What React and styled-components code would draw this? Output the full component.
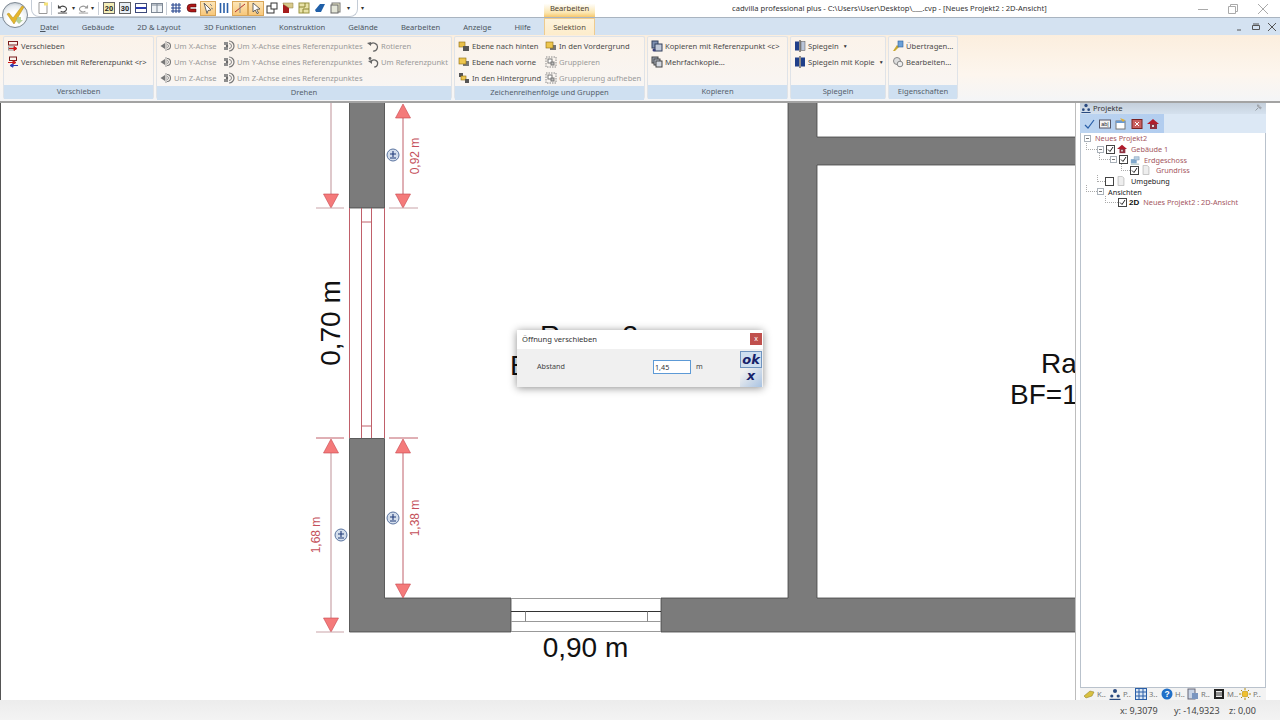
import React from 'react';
import styled, {createGlobalStyle} from 'styled-components';

const Global = createGlobalStyle`
  html, body {
    margin: 0;
    padding: 0;
    overflow: hidden;
    background: #fff;
    font-family: "Noto Sans", "Open Sans", sans-serif;
    font-size: 7.6px;
    color: #444;
  }
`;

const Page = styled.div`
  position: relative;
  width: 1280px;
  height: 720px;
  display: flex;
  flex-direction: column;
  overflow: hidden;
`;

/* title bar */
const TitleBar = styled.div`
  height: 18px;
  flex: none;
  display: flex;
  align-items: flex-start;
  background: #fff;
  border-bottom: 1px solid #a9b4c0;
  box-sizing: border-box;
`;

const Logo = styled.div`
  position: absolute;
  z-index: 2;
  left: 2px;
  top: 2px;
  width: 26px;
  height: 26px;
  border-radius: 50%;
  background: radial-gradient(circle at 50% 65%, #fff 35%, #e6ebef 65%, #97a2ad 100%);
  border: 1px solid #7d8893;
  box-sizing: border-box;
  display: flex;
  align-items: center;
  justify-content: center;
`;

const Quick = styled.div`
  margin-left: 31px;
  height: 17px;
  width: 327px;
  display: flex;
  align-items: center;
  padding-left: 5px;
  border: 1px solid #c4ccd6;
  border-top: none;
  border-radius: 0 0 8px 8px;
  box-sizing: border-box;
`;

const QuickSlot = styled.div`
  width: ${p => p.$w || 16}px;
  height: 15px;
  flex: none;
  display: flex;
  align-items: center;
  justify-content: center;
  box-sizing: border-box;
  font-size: 6px;
  color: #333;
  ${p => p.$on && 'background: linear-gradient(#fde6b8, #f8c77a); border: 1px solid #d9a659;'}
`;

const QuickSep = styled.div`
  width: 1px;
  height: 13px;
  background: #c8ced6;
  flex: none;
  margin: 0 ${p => p.$m || 2}px;
`;

const QuickMore = styled.div`
  margin-left: 3px;
  font-size: 6px;
  line-height: 16px;
  color: #333;
  width: 183px;
`;

const ContextTab = styled.div`
  width: 51px;
  height: 17px;
  line-height: 16px;
  text-align: center;
  color: #4a4030;
  background: linear-gradient(#fff 20%, #fbe6b0 75%, #f7c86e);
`;

const WindowTitle = styled.div`
  margin-left: 137px;
  line-height: 17px;
  color: #333;
  white-space: nowrap;
`;

const WinButtons = styled.div`
  margin-left: auto;
  display: flex;
  padding-right: 2px;
`;

const WinButton = styled.div`
  width: 30px;
  height: 17px;
  display: flex;
  align-items: center;
  justify-content: center;
`;

/* tabs */
const TabRow = styled.div`
  height: 17px;
  flex: none;
  display: flex;
  align-items: stretch;
  gap: 23px;
  padding-left: 40px;
  background: #d4e2f1;
  box-sizing: border-box;
  position: relative;
`;

const Tab = styled.div`
  line-height: 18px;
  color: #4b5560;
  white-space: nowrap;
  ${p => p.$active && `
    position: absolute;
    left: 544px;
    top: 0;
    height: 17px;
    width: 51px;
    text-align: center;
    color: #55503f;
    background: linear-gradient(#fdf3dc, #fdeccb);
    border: 1px solid #eecb8f;
    border-bottom: none;
    box-sizing: border-box;
    line-height: 16px;
  `}
`;

const MdiButtons = styled.div`
  position: absolute;
  right: 0;
  top: 4px;
  display: flex;
  gap: 6px;
  padding-right: 3px;
`;

/* ribbon */
const Ribbon = styled.div`
  height: 68px;
  flex: none;
  display: flex;
  gap: 2px;
  padding: 1px 2px 2px 3px;
  box-sizing: border-box;
  background: linear-gradient(#fbeede 0, #fdf6ee 60%, #f4f5f7);
  border-bottom: 2px solid #a3a3a3;
`;

const Group = styled.div`
  width: ${p => p.$w}px;
  flex: none;
  display: flex;
  flex-direction: column;
  background: linear-gradient(#fbf3ea, #f8f6f5);
  border: 1px solid #dfe3e8;
  border-bottom: none;
  border-radius: 2px;
  box-sizing: border-box;
`;

const GroupBody = styled.div`
  flex: 1;
  display: flex;
  padding: 1px 0 0 3px;
`;

const GroupFooter = styled.div`
  height: 14px;
  flex: none;
  line-height: 12px;
  text-align: center;
  color: #55606c;
  background: #cfe0f1;
`;

const Column = styled.div`
  width: ${p => (p.$w ? `${p.$w}px` : 'auto')};
  flex: none;
  display: flex;
  flex-direction: column;
`;

const Item = styled.div`
  height: 16px;
  display: flex;
  align-items: center;
  gap: 2px;
  white-space: nowrap;
  color: ${p => (p.$off ? '#9a9a9a' : '#4a4a4a')};
`;

const Caret = styled.span`
  font-size: 5px;
  margin-left: 2px;
  color: #333;
`;

/* main area */
const Main = styled.div`
  flex: 1;
  display: flex;
  min-height: 0;
`;

const Canvas = styled.div`
  position: relative;
  width: 1075px;
  flex: none;
  overflow: hidden;
  background: #fff;
  border-right: 1px solid #bdbdbd;
`;

const Drawing = styled.svg`
  display: block;
  width: 1075px;
  height: 597px;
`;

const Dialog = styled.div`
  position: absolute;
  left: 517px;
  top: 227px;
  width: 246px;
  height: 57px;
  display: flex;
  flex-direction: column;
  background: #f0f0f0;
  box-shadow: 0 1px 8px rgba(0, 0, 0, .45);
`;

const DialogHead = styled.div`
  height: 19px;
  flex: none;
  display: flex;
  align-items: center;
  justify-content: space-between;
  padding: 0 1px 1px 5px;
  box-sizing: border-box;
  background: #fff;
  color: #333;
`;

const CloseBox = styled.div`
  width: 12px;
  height: 12px;
  background: #c0504d;
  color: #fff;
  font-size: 7px;
  line-height: 11px;
  text-align: center;
`;

const DialogBody = styled.div`
  flex: 1;
  display: flex;
  align-items: flex-start;
  font-size: 7.2px;
`;

const FieldLabel = styled.div`
  width: 116px;
  margin-left: 20px;
  margin-top: 12px;
  color: #444;
`;

const FieldInput = styled.div`
  width: 35px;
  height: 12px;
  margin-top: 11px;
  padding-left: 1px;
  line-height: 12px;
  background: #fff;
  border: 1px solid #5d9ad6;
  color: #333;
`;

const FieldUnit = styled.div`
  margin-left: 5px;
  margin-top: 12px;
  width: 44px;
`;

const DialogActions = styled.div`
  width: 22px;
  height: 36px;
  margin-left: auto;
  margin-top: 2px;
  margin-right: 1px;
  display: flex;
  flex-direction: column;
  background: linear-gradient(135deg, #f0f0f0 40%, #a9c3e2);
`;

const ActionBtn = styled.div`
  height: 17px;
  font-family: "DejaVu Sans", sans-serif;
  font-weight: bold;
  font-style: italic;
  font-size: 13px;
  line-height: 16px;
  text-align: center;
  color: #16226a;
  box-sizing: border-box;
  ${p => p.$primary && 'background: #cfdff0; border: 1px solid #6f93bf;'}
`;

/* project panel */
const Side = styled.div`
  width: 186px;
  flex: none;
  margin-left: 4px;
  display: flex;
  flex-direction: column;
  background: #f3f3f3;
`;

const SideHead = styled.div`
  height: 11px;
  flex: none;
  display: flex;
  align-items: center;
  gap: 2px;
  padding: 0 3px 2px 1px;
  box-sizing: border-box;
  background: linear-gradient(#c4cfdb, #d5e1ee);
  color: #333;
`;

const PinSlot = styled.span`
  margin-left: auto;
  display: flex;
`;

const SideTools = styled.div`
  height: 19px;
  flex: none;
  display: flex;
  align-items: center;
  gap: 4px;
  padding-left: 3px;
  background: linear-gradient(90deg, #bcd4f0, #b2cdef 45%, #dce8f5 45.1%, #dce8f5);
`;

const ToolSlot = styled.div`
  width: 12px;
  height: 12px;
  display: flex;
  align-items: center;
  justify-content: center;
`;

const Tree = styled.div`
  flex: 1;
  background: #fff;
  border: 1px solid #b9c2cc;
  border-top: none;
  box-sizing: border-box;
  font-size: 7.3px;
`;

const Row = styled.div`
  position: relative;
  height: 10.7px;
  display: flex;
  align-items: center;
  gap: 2px;
  padding-left: ${p => p.$indent}px;
  white-space: nowrap;
  color: ${p => (p.$dark ? '#222' : '#a4565e')};
  ${p => p.$stub && `
    &::before {
      content: '';
      position: absolute;
      left: ${p.$indent - p.$stub}px;
      width: ${p.$stub - 1}px;
      top: -1px;
      height: 6px;
      border-left: 1px dotted #aaa;
      border-bottom: 1px dotted #aaa;
    }
  `}
`;

const Expander = styled.span`
  width: 7px;
  height: 7px;
  flex: none;
  border: 1px solid #aab2ba;
  box-sizing: border-box;
  position: relative;
  background: #fff;
  &::after {
    content: '';
    position: absolute;
    left: 1px;
    right: 1px;
    top: 2px;
    height: 1px;
    background: #777;
  }
`;

const Check = styled.span`
  width: 9px;
  height: 9px;
  flex: none;
  border: 1px solid #444;
  box-sizing: border-box;
  background: #fff;
  display: flex;
  align-items: center;
  justify-content: center;
`;

const RowLabel = styled.span`
  margin-left: ${p => p.$gap || 2}px;
`;

const BoldTag = styled.span`
  font-weight: bold;
  font-size: 8px;
  color: #111;
  font-family: "Liberation Sans", sans-serif;
`;

const SideTabs = styled.div`
  height: 12px;
  flex: none;
  display: flex;
  align-items: center;
  padding-left: 3px;
  background: #f3f3f3;
`;

const SideTab = styled.div`
  width: 26px;
  flex: none;
  display: flex;
  align-items: center;
  gap: 2px;
  color: #777;
`;

/* status bar */
const Status = styled.div`
  height: 20px;
  flex: none;
  display: flex;
  align-items: center;
  justify-content: flex-end;
  background: linear-gradient(#ececec, #f3f3f3);
  font-size: 9px;
  color: #444;
`;

const StatusCell = styled.div`
  width: ${p => p.$w}px;
  white-space: nowrap;
`;

/* icons */
const Svg = ({size = 12, children}) => (
  <svg width={size} height={size} viewBox="0 0 12 12" style={{flex: 'none'}}>{children}</svg>
);

const shapes = {
  move: <>
    <rect x="1.5" y="1.5" width="9" height="3.5" fill="none" stroke="#7a1c1c" />
    <rect x="1.5" y="7" width="6" height="3" fill="none" stroke="#999" />
    <path d="M2 8.5h7M7 6.5l3 2-3 2z" stroke="#d01818" fill="#d01818" />
  </>,
  moveRef: <>
    <rect x="2.5" y="1" width="7" height="3.5" fill="none" stroke="#7a1c1c" />
    <path d="M1 6.5h7M6 4.8l3 1.7-3 1.7z" stroke="#d01818" fill="#d01818" />
    <path d="M11 9.5H4M6 7.8L3 9.5l3 1.7z" stroke="#2a3bb0" fill="#2a3bb0" />
  </>,
  rot: <>
    <path d="M.5 6L5 3v6z" fill="#777" />
    <path d="M6 1v10" stroke="#999" />
    <path d="M7 2.5a3.5 3.5 0 0 1 0 7" fill="none" stroke="#777" strokeWidth="1.1" />
    <path d="M7 4.5a1.5 1.5 0 0 1 0 3" fill="none" stroke="#999" />
  </>,
  rotRef: <>
    <path d="M1 2h4v3H1zM1 7h4v3H1z" fill="#8d8d8d" />
    <path d="M6 1a5 5 0 0 1 0 10" fill="none" stroke="#777" strokeWidth="1.2" />
    <path d="M6 3.5a2.5 2.5 0 0 1 0 5" fill="none" stroke="#888" />
    <circle cx="4" cy="6" r="1.2" fill="#666" />
  </>,
  rotate: <>
    <path d="M3 5a4 4 0 1 1 3 6" fill="none" stroke="#666" strokeWidth="1.2" />
    <path d="M0 3l4-1v4z" fill="#666" />
  </>,
  rotate2: <>
    <circle cx="3" cy="2.5" r="1.4" fill="#666" />
    <path d="M4 6a3.5 3.5 0 1 1 3 5" fill="none" stroke="#666" strokeWidth="1.2" />
    <path d="M1 5l4-1v4z" fill="#666" />
  </>,
  back: <>
    <rect x="1" y="2" width="6" height="5" fill="#e8c04a" stroke="#8a6a10" strokeWidth=".6" />
    <rect x="5" y="6" width="6" height="5" fill="#555" />
  </>,
  front: <>
    <rect x="5" y="5" width="6" height="5" fill="#777" />
    <rect x="1" y="2" width="7" height="6" fill="#eec64e" stroke="#8a6a10" strokeWidth=".6" />
  </>,
  bottom: <>
    <rect x="1" y="1" width="4" height="4" fill="#555" />
    <rect x="3" y="4" width="5" height="4" fill="#eec64e" stroke="#8a6a10" strokeWidth=".6" />
    <rect x="7" y="7" width="4" height="4" fill="#555" />
  </>,
  group: <>
    <rect x="1" y="1" width="10" height="10" fill="none" stroke="#888" strokeDasharray="1.5 1" />
    <rect x="3" y="3" width="4" height="4" fill="#fff" stroke="#777" />
    <rect x="6" y="6" width="3" height="3" fill="#bbb" stroke="#777" />
  </>,
  copyRef: <>
    <rect x="1" y="1" width="6" height="7" fill="#7d8fb0" stroke="#33415e" />
    <rect x="4" y="4" width="7" height="7" fill="#c0c8d8" stroke="#33415e" />
    <circle cx="3" cy="10" r="1.5" fill="#3a3f7a" />
  </>,
  copyMany: <>
    <rect x="1" y="1" width="6" height="6" fill="#9aa4b4" stroke="#444" />
    <rect x="3" y="3" width="6" height="6" fill="#b5bdca" stroke="#444" />
    <rect x="5" y="5" width="6" height="6" fill="#d3d8e0" stroke="#444" />
  </>,
  mirror: <>
    <rect x="1" y="1.5" width="4" height="9" fill="#1f3f8a" />
    <rect x="7" y="1.5" width="4" height="9" fill="#b9c4d8" stroke="#555" strokeWidth=".5" />
    <path d="M6 0v12" stroke="#222" />
  </>,
  mirrorCopy: <>
    <rect x="1" y="1.5" width="4" height="9" fill="#1f3f8a" />
    <rect x="7" y="1.5" width="4" height="9" fill="#1f3f8a" />
    <path d="M6 0v12" stroke="#222" />
  </>,
  transfer: <>
    <path d="M1 11l4-6 2 2-4 4z" fill="#c9a830" />
    <rect x="6" y="1" width="5" height="6" fill="#6aa0d8" stroke="#2d5f9a" strokeWidth=".6" />
  </>,
  edit: <>
    <circle cx="5" cy="5" r="3.5" fill="#ddd" stroke="#888" />
    <circle cx="8" cy="8" r="2.8" fill="#eee" stroke="#888" />
  </>,
  doc: <>
    <path d="M2 .5h6l2 2v9H2z" fill="#fff" stroke="#999" />
    <path d="M7 .5h4v3H7z" fill="#f5e27a" />
  </>,
  undo: <>
    <path d="M3 5a4 3 0 1 1 1 4" fill="none" stroke="#444" strokeWidth="1.2" />
    <path d="M1 2v4h4z" fill="#444" />
    <path d="M1 11h10" stroke="#444" />
  </>,
  redo: <>
    <path d="M9 5a4 3 0 1 0-1 4" fill="none" stroke="#999" strokeWidth="1.2" />
    <path d="M11 2v4H7z" fill="#999" />
    <path d="M1 11h10" stroke="#999" />
  </>,
  d2: <>
    <rect x=".5" y=".5" width="11" height="11" fill="#f4eeb8" stroke="#666" />
    <text x="6" y="9" fontSize="7.5" fontWeight="bold" textAnchor="middle" fill="#222" fontFamily="Liberation Sans">20</text>
  </>,
  d3: <>
    <rect x=".5" y=".5" width="11" height="11" fill="#e8eef4" stroke="#666" />
    <text x="6" y="9" fontSize="7.5" fontWeight="bold" textAnchor="middle" fill="#222" fontFamily="Liberation Sans">30</text>
  </>,
  rows: <>
    <rect x=".5" y="1.5" width="11" height="9" fill="#fff" stroke="#3d4a7a" />
    <path d="M1 6h10" stroke="#2a3bb0" strokeWidth="2" />
  </>,
  cols: <>
    <rect x=".5" y="1.5" width="11" height="9" fill="#eef2f6" stroke="#7d8794" />
    <path d="M6 2v8M1 3h10" stroke="#7d8794" />
  </>,
  grid: <path d="M3 1v10M6 1v10M9 1v10M1 3h10M1 6h10M1 9h10" stroke="#1f3f8a" />,
  magnet: <path d="M10 2H5a4 4 0 0 0 0 8h5V7H5a1 1 0 0 1 0-2h5z" fill="#b01818" stroke="#300" strokeWidth=".5" />,
  snap: <>
    <path d="M2 1l7 7-3 .5-1 3z" fill="#fff" stroke="#666" />
    <path d="M8 2l2 2M9 6l2 1" stroke="#888" />
  </>,
  bars: <path d="M2.5 1v10M6 1v10M9.5 1v10" stroke="#2a5fa8" strokeWidth="1.6" />,
  line: <>
    <path d="M1 10L11 2" stroke="#b03030" />
    <path d="M6 1v10" stroke="#888" />
  </>,
  cursor: <path d="M3 1l7 6-3.4.4L8.5 11l-1.5.6-1.8-3.6L3 10z" fill="#fff" stroke="#444" strokeWidth=".8" />,
  frames: <>
    <rect x="1" y="4" width="7" height="7" fill="#fff" stroke="#333" />
    <rect x="5" y="1" width="6" height="6" fill="#fff" stroke="#333" />
  </>,
  roof: <>
    <path d="M1 11V2l6 3v6z" fill="#a51c1c" />
    <path d="M1 1h10v5H7L1 2z" fill="#d8c98a" stroke="#8a7a40" strokeWidth=".5" />
  </>,
  stairs: <>
    <rect x="1" y="1" width="10" height="10" fill="#e9e3a8" stroke="#9a9440" />
    <path d="M1 5h6V1M5 11V7h6" stroke="#8a8430" fill="none" />
  </>,
  diamond: <path d="M1 8l5-6h5L7 10H2z" fill="#1f5fa8" />,
  box: <>
    <rect x="2" y="1" width="8" height="9" fill="#f0eecd" stroke="#777" />
    <rect x="1" y="3" width="7" height="8" fill="#e4e6d8" stroke="#666" />
  </>,
  tick: <path d="M2 7l3 3 6-8" fill="none" stroke="#2a5fa8" strokeWidth="1.2" />,
  abl: <>
    <rect x=".5" y="2" width="11" height="8" fill="#f4f4f4" stroke="#556" />
    <text x="6" y="8" fontSize="5.5" textAnchor="middle" fill="#223" fontFamily="Liberation Sans">ab|</text>
  </>,
  props: <>
    <rect x="1" y="3" width="9" height="8" fill="#fff" stroke="#777" />
    <path d="M1 3h9v2H1z" fill="#6a9ad0" />
    <path d="M5 0l5 2-2 2z" fill="#e2b030" />
  </>,
  redX: <>
    <rect x="1" y="1.5" width="10" height="9" fill="#c86060" stroke="#7a2020" />
    <path d="M4 4l4 4M8 4L4 8" stroke="#fff" />
  </>,
  house: <>
    <path d="M0 6l6-5 6 5z" fill="#b01c2c" />
    <rect x="3" y="6" width="7" height="5" fill="#8f3040" />
    <rect x="5" y="7" width="2" height="2" fill="#ddd" />
  </>,
  floors: <>
    <rect x="1" y="5" width="7" height="5" fill="#7fa8cc" />
    <path d="M5 2h6v4H5z" fill="#b8cfe4" stroke="#6a8aa8" strokeWidth=".5" />
    <path d="M1 11h10" stroke="#8aa" />
  </>,
  sheet: <path d="M2.5 .5h5l2 2v9h-7z" fill="#eeeeee" stroke="#bbb" />,
  people: <>
    <circle cx="6" cy="3" r="2" fill="#2a4a80" />
    <circle cx="2.8" cy="8" r="1.6" fill="#2a4a80" />
    <circle cx="9.2" cy="8" r="1.6" fill="#2a4a80" />
    <path d="M.5 11.5h11" stroke="#2a4a80" strokeWidth="1.4" />
  </>,
  pin: <path d="M1 8l6-5 4 1-2 4-6 2z" fill="#d8c040" stroke="#8a7a20" strokeWidth=".5" />,
  table: <>
    <rect x=".5" y=".5" width="11" height="11" fill="#dce8f5" stroke="#2a5fa8" />
    <path d="M4 1v10M8 1v10M1 4h10M1 8h10" stroke="#2a5fa8" />
  </>,
  help: <>
    <circle cx="6" cy="6" r="5.5" fill="#1f6fc8" />
    <text x="6" y="9" fontSize="8.5" fontWeight="bold" textAnchor="middle" fill="#fff" fontFamily="Liberation Sans">?</text>
  </>,
  report: <>
    <rect x="1" y="1" width="7" height="10" fill="#c8d4e6" stroke="#667" />
    <path d="M5 5h6v6H5z" fill="#7a96c0" />
  </>,
  memo: <>
    <rect x="1" y="1" width="10" height="10" fill="#222" />
    <rect x="3" y="3" width="6" height="6" fill="#eee" />
    <path d="M3 5h6M3 7h6" stroke="#333" />
  </>,
  sun: <>
    <circle cx="6" cy="6" r="3" fill="#f0c030" stroke="#b08a10" strokeWidth=".5" />
    <path d="M6 0v2M6 10v2M0 6h2M10 6h2M2 2l1.4 1.4M8.6 8.6L10 10M2 10l1.4-1.4M8.6 3.4L10 2" stroke="#b08a10" />
  </>,
  pinTack: <path d="M3 9l3-3M5 3l4 4M6 2l4 4-2 0-2-2z" stroke="#8a8f96" fill="#fff" />,
};

const Icon = ({name, size}) => <Svg size={size}>{shapes[name]}</Svg>;

const Tick = () => (
  <svg width="7" height="7" viewBox="0 0 7 7"><path d="M1 3.5l2 2 3-4.5" fill="none" stroke="#222" strokeWidth="1" /></svg>
);

/* ribbon data */
const groups = [
  {title: 'Verschieben', w: 151, cols: [
    {items: [['move', 'Verschieben'], ['moveRef', 'Verschieben mit Referenzpunkt <r>']]},
  ]},
  {title: 'Drehen', w: 296, cols: [
    {w: 63, items: [['rot', 'Um X-Achse', 1], ['rot', 'Um Y-Achse', 1], ['rot', 'Um Z-Achse', 1]]},
    {w: 144, items: [
      ['rotRef', 'Um X-Achse eines Referenzpunktes', 1],
      ['rotRef', 'Um Y-Achse eines Referenzpunktes', 1],
      ['rotRef', 'Um Z-Achse eines Referenzpunktes', 1],
    ]},
    {items: [['rotate', 'Rotieren', 1], ['rotate2', 'Um Referenzpunkt', 1]]},
  ]},
  {title: 'Zeichenreihenfolge und Gruppen', w: 191, cols: [
    {w: 87, items: [['back', 'Ebene nach hinten'], ['front', 'Ebene nach vorne'], ['bottom', 'In den Hintergrund']]},
    {items: [['front', 'In den Vordergrund'], ['group', 'Gruppieren', 1], ['group', 'Gruppierung aufheben', 1]]},
  ]},
  {title: 'Kopieren', w: 141, cols: [
    {items: [['copyRef', 'Kopieren mit Referenzpunkt <c>'], ['copyMany', 'Mehrfachkopie...']]},
  ]},
  {title: 'Spiegeln', w: 96, cols: [
    {items: [['mirror', 'Spiegeln', 0, 1], ['mirrorCopy', 'Spiegeln mit Kopie', 0, 1]]},
  ]},
  {title: 'Eigenschaften', w: 70, cols: [
    {items: [['transfer', 'Übertragen...'], ['edit', 'Bearbeiten...']]},
  ]},
];

const tabs = ['Gebäude', '2D & Layout', '3D Funktionen', 'Konstruktion', 'Gelände', 'Bearbeiten', 'Anzeige', 'Hilfe'];

const Arrow = ({x, y, up, color = '#f47a7a'}) => (
  <path
    d={up ? `M${x} ${y}l-7.5 14h15z` : `M${x} ${y}l-7.5 -14h15z`}
    fill={color}
    stroke="#c8474f"
    strokeWidth=".6"
  />
);

const PlusMark = ({x, y}) => (
  <g>
    <circle cx={x} cy={y} r="6" fill="#d4deec" stroke="#5a74a0" />
    <path d={`M${x - 3} ${y - 1}h6M${x} ${y - 4}v6M${x - 3} ${y + 3}h6`} stroke="#1f3a78" strokeWidth="1.1" fill="none" />
  </g>
);

const DimText = ({x, y, children}) => (
  <text
    x={x}
    y={y}
    transform={`rotate(-90 ${x} ${y})`}
    textAnchor="middle"
    fontSize="12"
    fontFamily="Liberation Sans"
    fill="#c4505a"
  >{children}</text>
);

const WALL = '#7b7b7b';
const RED = '#c0606a';

const Plan = () => (
  <Drawing viewBox="0 103 1075 597">
    <g fill={WALL} stroke="#444" strokeWidth=".8">
      <rect x="349.5" y="100" width="35" height="108" />
      <path d="M349.5 438.5h35v159.5h126.5v34H349.5z" />
      <path d="M661 598h127V100h29v37h262v28H817v433h262v34H661z" />
    </g>
    <path d="M.5 103v597" stroke="#555" />

    {/* window left */}
    <g stroke={RED} strokeWidth="1" fill="none">
      <path d="M349.5 208v230M384.5 208v230M361.5 208v230M371.5 208v230M361.5 222h10M361.5 426h10" />
    </g>
    {/* window bottom */}
    <path d="M511 598.5h150M511 621.5h150M511 631.5h150" stroke="#999" fill="none" />
    <path d="M511 611.5h150" stroke="#333" fill="none" />
    <path d="M525.5 611.5v10M647.5 611.5v10" stroke="#888" fill="none" />

    {/* upper dims */}
    <path d="M331 103v92" stroke="#c9a3a8" strokeWidth="1.2" />
    <Arrow x={331} y={208} />
    <path d="M316 208h28" stroke="#c9a3a8" />
    <path d="M403 115v80" stroke={RED} />
    <Arrow x={403} y={104} up />
    <Arrow x={403} y={208} />
    <path d="M389 208h29" stroke="#c9a3a8" />
    <DimText x={419} y={156}>0,92 m</DimText>
    <PlusMark x={393} y={155} />

    {/* lower dims */}
    <path d="M316 438h28M389 438h29" stroke={RED} />
    <path d="M331 452v166" stroke="#c9a3a8" strokeWidth="1.2" />
    <Arrow x={331} y={439} up />
    <Arrow x={331} y={632} />
    <path d="M316 632h28" stroke="#c9a3a8" />
    <path d="M403 452v134" stroke={RED} />
    <Arrow x={403} y={439} up />
    <Arrow x={403} y={598} />
    <DimText x={320} y={535}>1,68 m</DimText>
    <DimText x={419} y={518}>1,38 m</DimText>
    <PlusMark x={341} y={535} />
    <PlusMark x={393} y={518} />

    <g fontFamily="Liberation Sans" fill="#111" fontSize="28">
      <text x="340" y="323" textAnchor="middle" transform="rotate(-90 340 323)">0,70 m</text>
      <text x="585.5" y="657" textAnchor="middle">0,90 m</text>
      <text x="540" y="345">Raum 3</text>
      <text x="510" y="375">BF=14,20 m²</text>
      <text x="1041" y="373">Raum 4</text>
      <text x="1010" y="404">BF=18,60 m²</text>
    </g>
  </Drawing>
);

const App = () => (
  <Page>
    <Global />
    <TitleBar>
      <Quick>
        <Icon name="doc" />
        <QuickSep />
        <QuickSlot><Icon name="undo" size={11} /></QuickSlot>
        <QuickSlot $w={7}>▾</QuickSlot>
        <QuickSlot $w={12}><Icon name="redo" size={11} /></QuickSlot>
        <QuickSlot $w={7}>▾</QuickSlot>
        <QuickSep />
        <QuickSlot><Icon name="d2" /></QuickSlot>
        <QuickSlot><Icon name="d3" /></QuickSlot>
        <QuickSlot><Icon name="rows" /></QuickSlot>
        <QuickSlot><Icon name="cols" /></QuickSlot>
        <QuickSep $m={1} />
        <QuickSlot><Icon name="grid" /></QuickSlot>
        <QuickSlot><Icon name="magnet" /></QuickSlot>
        <QuickSlot $on><Icon name="snap" /></QuickSlot>
        <QuickSlot><Icon name="bars" /></QuickSlot>
        <QuickSlot $on><Icon name="line" /></QuickSlot>
        <QuickSlot $on><Icon name="cursor" /></QuickSlot>
        <QuickSlot><Icon name="frames" /></QuickSlot>
        <QuickSlot><Icon name="roof" /></QuickSlot>
        <QuickSlot><Icon name="stairs" /></QuickSlot>
        <QuickSlot><Icon name="diamond" /></QuickSlot>
        <QuickSlot><Icon name="box" /></QuickSlot>
        <QuickSlot $w={8}>▾</QuickSlot>
      </Quick>
      <QuickMore>▾</QuickMore>
      <ContextTab>Bearbeiten</ContextTab>
      <WindowTitle>cadvilla professional plus - C:\Users\User\Desktop\___.cvp - [Neues Projekt2 : 2D-Ansicht]</WindowTitle>
      <WinButtons>
        <WinButton><svg width="10" height="10"><path d="M0 5.5h10" stroke="#aaa" /></svg></WinButton>
        <WinButton><svg width="10" height="10"><path d="M2.5 2.5v-2h7v7h-2M.5 2.5h7v7h-7z" stroke="#aaa" fill="none" /></svg></WinButton>
        <WinButton><svg width="10" height="10"><path d="M0 0l10 10M10 0L0 10" stroke="#aaa" /></svg></WinButton>
      </WinButtons>
    </TitleBar>
    <Logo>
      <svg width="22" height="22" viewBox="0 0 22 22">
        <path d="M3 10l2-1 4 5L18 2l2 1-10 17z" fill="#e6b62c" stroke="#b08c1e" strokeWidth=".5" />
        <path d="M13 13h4v3h2l-4 4-4-4h2z" fill="#a9c98a" opacity=".85" />
      </svg>
    </Logo>
    <TabRow>
      <Tab><u>D</u>atei</Tab>
      {tabs.map(t => <Tab key={t}>{t}</Tab>)}
      <Tab $active>Selektion</Tab>
      <MdiButtons>
        <svg width="10" height="10"><path d="M2 8h4" stroke="#555" /></svg>
        <svg width="10" height="10"><path d="M1.5 3.5h7v4h-7zM2 2h6" stroke="#555" fill="none" /></svg>
        <svg width="10" height="10"><path d="M1 1l8 8M9 1L1 9" stroke="#555" /></svg>
      </MdiButtons>
    </TabRow>
    <Ribbon>
      {groups.map(g => (
        <Group key={g.title} $w={g.w}>
          <GroupBody>
            {g.cols.map((c, i) => (
              <Column key={i} $w={c.w}>
                {c.items.map(([icon, label, off, caret]) => (
                  <Item key={label} $off={off}>
                    <Icon name={icon} />
                    {label}
                    {caret ? <Caret>▼</Caret> : null}
                  </Item>
                ))}
              </Column>
            ))}
          </GroupBody>
          <GroupFooter>{g.title}</GroupFooter>
        </Group>
      ))}
    </Ribbon>
    <Main>
      <Canvas>
        <Plan />
        <Dialog>
          <DialogHead>
            Öffnung verschieben
            <CloseBox>x</CloseBox>
          </DialogHead>
          <DialogBody>
            <FieldLabel>Abstand</FieldLabel>
            <FieldInput>1,45</FieldInput>
            <FieldUnit>m</FieldUnit>
            <DialogActions>
              <ActionBtn $primary>ok</ActionBtn>
              <ActionBtn>x</ActionBtn>
            </DialogActions>
          </DialogBody>
        </Dialog>
      </Canvas>
      <Side>
        <SideHead>
          <Icon name="people" size={10} />
          Projekte
          <PinSlot><Icon name="pinTack" size={10} /></PinSlot>
        </SideHead>
        <SideTools>
          <ToolSlot><Icon name="tick" /></ToolSlot>
          <ToolSlot><Icon name="abl" /></ToolSlot>
          <ToolSlot><Icon name="props" /></ToolSlot>
          <ToolSlot><Icon name="redX" /></ToolSlot>
          <ToolSlot><Icon name="house" /></ToolSlot>
        </SideTools>
        <Tree>
          <Row $indent={3}><Expander /><RowLabel>Neues Projekt2</RowLabel></Row>
          <Row $indent={16} $stub={11}><Expander /><Check><Tick /></Check><Icon name="house" size={10} /><RowLabel>Gebäude 1</RowLabel></Row>
          <Row $indent={29} $stub={11}><Expander /><Check><Tick /></Check><Icon name="floors" size={10} /><RowLabel>Erdgeschoss</RowLabel></Row>
          <Row $indent={49} $stub={9}><Check><Tick /></Check><Icon name="sheet" size={10} /><RowLabel $gap={3}>Grundriss</RowLabel></Row>
          <Row $indent={24} $dark $stub={8}><Check /><Icon name="sheet" size={10} /><RowLabel $gap={3}>Umgebung</RowLabel></Row>
          <Row $indent={16} $dark $stub={11}><Expander /><RowLabel $gap={0}>Ansichten</RowLabel></Row>
          <Row $indent={37} $stub={13}><Check><Tick /></Check><BoldTag>2D</BoldTag><RowLabel $gap={2}>Neues Projekt2 : 2D-Ansicht</RowLabel></Row>
        </Tree>
        <SideTabs>
          <SideTab><Icon name="pin" />K..</SideTab>
          <SideTab><Icon name="people" />P..</SideTab>
          <SideTab><Icon name="table" />3..</SideTab>
          <SideTab><Icon name="help" />H..</SideTab>
          <SideTab><Icon name="report" />R..</SideTab>
          <SideTab><Icon name="memo" />M..</SideTab>
          <SideTab><Icon name="sun" />P..</SideTab>
        </SideTabs>
      </Side>
    </Main>
    <Status>
      <StatusCell $w={54}>x: 9,3079</StatusCell>
      <StatusCell $w={55}>y: -14,9323</StatusCell>
      <StatusCell $w={51}>z: 0,00</StatusCell>
    </Status>
  </Page>
);

export default App;
